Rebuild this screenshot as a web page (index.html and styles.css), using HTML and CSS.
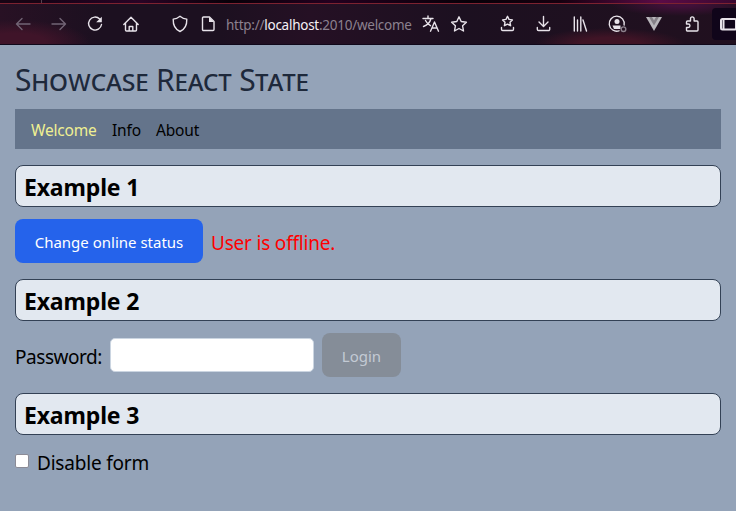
FILE: index.html
```html
<!DOCTYPE html>
<html lang="en">
<head>
<meta charset="utf-8">
<title>Showcase React State</title>
<link rel="stylesheet" href="styles.css">
</head>
<body>
<header class="browser">
  <div class="tabs"></div>
  <div class="toolbar">
    <div class="group nav-icons">
      <svg class="icon dim" viewBox="0 0 18 18"><path d="M16 9H2.500M8 3.500L2.500 9L8 14.500"/></svg>
      <svg class="icon dim" viewBox="0 0 18 18"><path d="M2 9h13.500M10 3.500L15.500 9L10 14.500"/></svg>
      <svg class="icon" viewBox="0 0 18 18"><path d="M13.700 4A6.500 6.500 0 1 0 15.500 9.500"/><path class="fill" d="M15.800 1.700v5.500h-5.600z"/></svg>
      <svg class="icon" viewBox="0 0 18 18"><path d="M1.800 9.500L9 2.300l7.200 7.200M3.500 8v7a1 1 0 0 0 1 1h9a1 1 0 0 0 1-1V8M7.200 16v-4.500h3.600V16"/></svg>
    </div>
    <div class="group page-icons">
      <svg class="icon" viewBox="0 0 18 18"><path d="M9 1.200C7 2.900 4.500 3.900 2.200 4.100C2 10 4 14.500 9 16.500C14 14.500 16 10 15.800 4.100C13.500 3.900 11 2.900 9 1.200z"/></svg>
      <svg class="icon" viewBox="0 0 18 18"><path d="M4.500 2h6l4.500 4.500V14.500a1 1 0 0 1-1 1H4.500a1 1 0 0 1-1-1V3a1 1 0 0 1 1-1z"/><path class="fill" d="M10 2v5h5z"/></svg>
    </div>
    <div class="url">http://<b>localhost</b>:2010/welcome</div>
    <div class="group page-icons">
      <svg class="icon" viewBox="0 0 18 18"><path d="M1 3.500h10M6 1v2.500M9 3.500C8 7.500 5 10.200 1.500 11.500M3.500 5.500C5 8.500 6.500 9.700 8.500 10.700M8.500 16.200L12.500 7l4 9.200M10 13h5"/></svg>
      <svg class="icon" viewBox="0 0 18 18"><path d="M9 1.800l2.200 4.700 5.200.7-3.800 3.600.9 5.200L9 13.500 4.500 16l.9-5.200L1.600 7.200l5.200-.7z"/></svg>
    </div>
    <div class="group tools">
      <svg class="icon" viewBox="0 0 18 18"><path d="M9.500 1.300l1.500 3.100 3.400.5-2.400 2.400.6 3.400-3.100-1.600-3.100 1.600.6-3.400-2.400-2.400 3.400-.5zM3.500 12.500v1.800a1.200 1.200 0 0 0 1.200 1.200h9.600a1.200 1.200 0 0 0 1.200-1.200v-1.800"/></svg>
      <svg class="icon" viewBox="0 0 18 18"><path d="M8.500 1.500v9.500M4 7l4.500 4.500L13 7M2.300 12.500v1.800a1.200 1.200 0 0 0 1.200 1.200h10a1.200 1.200 0 0 0 1.200-1.200v-1.800"/></svg>
      <svg class="icon" viewBox="0 0 18 18"><path d="M2.300 2v14M5.500 5v11M8.800 2v14M11 5l3.500 11"/></svg>
      <svg class="icon" viewBox="0 0 18 18"><path d="M10 15.800A7.500 7.500 0 1 1 15.100 10"/><circle class="fill" cx="8" cy="6.500" r="2.500"/><path class="fill" d="M3.500 10.500h8v3.500H5z"/><circle class="status" cx="14.500" cy="14.200" r="2.300"/></svg>
      <svg class="icon" viewBox="0 0 18 18"><path class="vue" d="M0 2h16L8 16z"/><path class="vue-inner" d="M3 2h3l2 3.500L10 2h3L8 10.500z"/></svg>
      <svg class="icon" viewBox="0 0 18 18"><path d="M3.500 9V7a1 1 0 0 1 1-1h3V3.700a1.800 1.800 0 0 1 3.600 0V6H14a1 1 0 0 1 1 1v8a1 1 0 0 1-1 1H4.500a1 1 0 0 1-1-1v-2.500h1.700a1.700 1.700 0 0 0 0-3.500z"/></svg>
    </div>
    <div class="sidebar-button"><svg class="icon" viewBox="0 0 18 18"><rect class="panel" x="1" y="4" width="15" height="10.500" rx="1.500"/><path class="panel" d="M3.500 4.500v9.500"/></svg></div>
  </div>
</header>
<main>
  <h1>Showcase React State</h1>
  <nav><a class="active">Welcome</a><a class="info">Info</a><a class="about">About</a></nav>
  <h2>Example 1</h2>
  <div class="row"><button class="primary">Change online status</button><span class="offline">User is offline.</span></div>
  <h2>Example 2</h2>
  <div class="row"><label class="pw-label" for="pw">Password:</label><input id="pw" class="field" type="password"><button class="disabled" disabled>Login</button></div>
  <h2>Example 3</h2>
  <div class="row check-row"><span class="check"></span><span class="check-label">Disable form</span></div>
</main>
</body>
</html>
```
FILE: styles.css
```css
* { box-sizing: border-box; }
body {
  margin: 0;
  height: 511px;
  overflow: hidden;
  background: #94a3b8;
  color: #000;
  font-family: "Noto Sans", "Open Sans", sans-serif;
}
.browser { height: 45px; overflow: hidden; border-bottom: 1px solid #10081a; background: #1c1020; }
.tabs {
  height: 3px;
  background: linear-gradient(90deg, #180414 0 41px, #56424f 41px 42px, #160216 42px, #2a0425 140px, #080008 230px, #24001f 330px, #080008 470px, #16000f 560px, #5b0b46 660px, #3b0830);
}
.toolbar {
  height: 42px;
  display: flex;
  align-items: center;
  border-top: 1px solid #7c2230;
  padding-left: 14px;
  background:
    radial-gradient(ellipse 75px 22px at 15px 38px, #3f1429 40%, transparent),
    radial-gradient(ellipse 75px 16px at 610px 40px, #401426 40%, transparent),
    radial-gradient(ellipse 70px 12px at 680px 0, #42103a 20%, transparent),
    linear-gradient(90deg, #281124, #1c1020 100px, #1c1020 220px, #251024 310px, #1c1020 460px, #21101f);
}
.group { display: flex; flex: none; margin-top: -1px; }
.nav-icons { gap: 18px; }
.page-icons { gap: 10px; }
.nav-icons + .page-icons { margin-left: 31px; }
.tools { gap: 19px; margin-left: 30px; }
.icon {
  display: block;
  flex: none;
  width: 18px;
  height: 18px;
  fill: none;
  stroke: #e8e3ea;
  stroke-width: 1.4;
  stroke-linejoin: round;
  stroke-linecap: round;
  overflow: visible;
}
.dim { stroke: #716475; }
.fill { fill: #e8e3ea; stroke: none; }
.status { stroke: #8d818d; }
.vue { fill: #b9b6bb; stroke: none; }
.vue-inner { fill: #858087; stroke: none; }
.panel { stroke-width: 2; }
.url {
  width: 205px;
  padding-left: 9px;
  flex: none;
  white-space: nowrap;
  font-size: 13.5px;
  line-height: 20px;
  color: #8c818f;
  letter-spacing: -0.26px;
}
.url b { font-weight: 400; color: #f5f1f6; }
.sidebar-button {
  width: 40px;
  height: 32px;
  flex: none;
  display: flex;
  align-items: center;
  margin: -1px 0 0 11px;
  padding-left: 8px;
  border-radius: 4px;
  background: #10051a;
}
main { padding: 16px 15px 0; }
h1 {
  margin: 0 0 12px;
  height: 36px;
  line-height: 38px;
  font-size: 30px;
  font-weight: 400;
  font-variant: small-caps;
  color: #1e293b;
  white-space: nowrap;
  letter-spacing: -0.18px;
}
nav {
  height: 40px;
  margin-bottom: 16px;
  padding: 2px 16px 0;
  display: flex;
  align-items: center;
  gap: 16px;
  background: #64748b;
  font-size: 15.5px;
  letter-spacing: -0.18px;
}
.active { color: #f0f092; width: 65px; }
.info { width: 28px; }
h2 {
  height: 42px;
  margin: 0 0 12px;
  padding: 1px 8px 0;
  border: 1px solid #334155;
  border-radius: 8px;
  background: #e2e8f0;
  font-size: 23px;
  line-height: 40px;
  font-weight: 700;
  letter-spacing: -0.15px;
}
.row {
  height: 44px;
  margin-bottom: 16px;
  display: flex;
  align-items: center;
  gap: 8px;
  font-size: 19px;
  letter-spacing: -0.2px;
  white-space: nowrap;
}
button {
  height: 44px;
  padding: 2px 0 0;
  border: 0;
  border-radius: 8px;
  font: 15px/24px "Noto Sans", "Open Sans", sans-serif;
  color: #fff;
}
.primary { width: 188px; background: #2563eb; }
.disabled { width: 79px; background: #858d98; color: #c3cad4; }
.offline { color: #f00; padding-top: 3px; }
.pw-label { width: 87px; padding-top: 3px; letter-spacing: -0.45px; }
.field {
  width: 204px;
  height: 34px;
  margin: 0;
  border: 1px solid #cbd5e1;
  border-radius: 5px;
  background: #fff;
}
.check { width: 14px; height: 14px; border: 1px solid #8b8b96; border-radius: 2px; background: #fff; margin-top: -16px; }
.check-label { margin-top: -12px; }
```
